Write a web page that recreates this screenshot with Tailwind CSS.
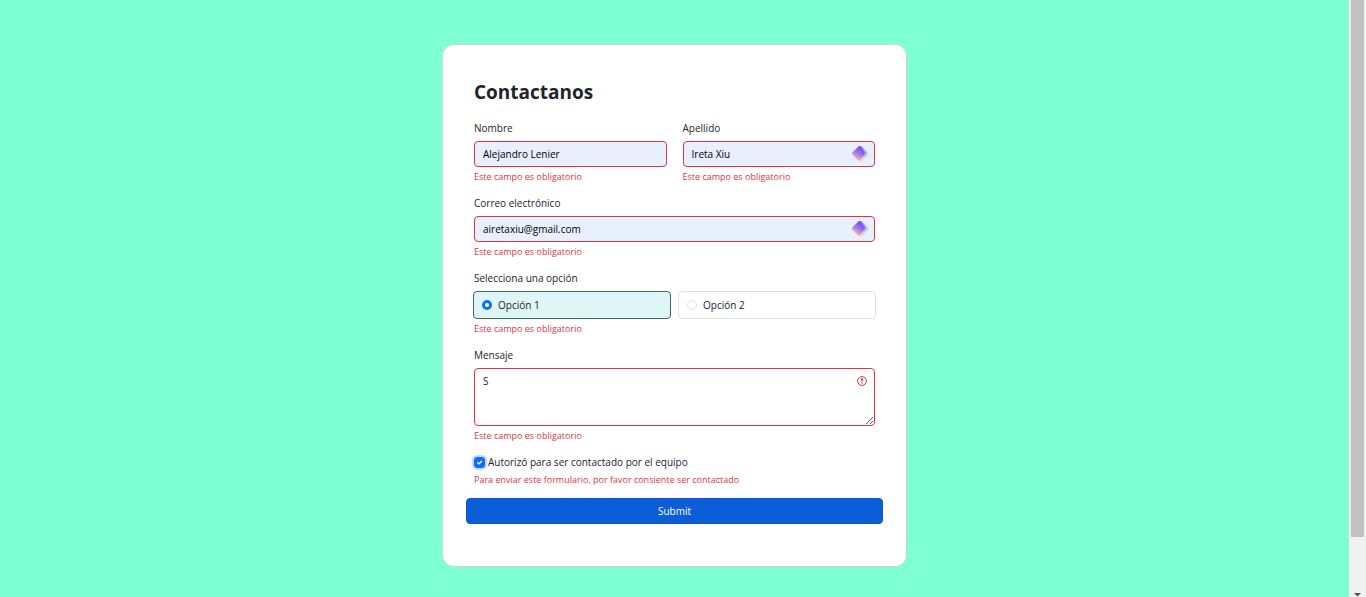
<!DOCTYPE html>
<html lang="es">
<head>
<meta charset="utf-8">
<meta name="viewport" content="width=device-width, initial-scale=1">
<title>Contactanos</title>
<script src="https://cdn.jsdelivr.net/npm/@tailwindcss/browser@4"></script>
</head>
<body class="flex min-h-screen bg-[#7fffd4] font-['Open_Sans','Noto_Sans',sans-serif] text-[10px] leading-4 text-[#212529]">
<main class="flex min-w-0 flex-1 items-start justify-center pt-11">
  <form novalidate class="w-full max-w-[465px] rounded-xl border border-[#d3d3d3] bg-white px-[31px] pt-[33px] pb-[42px]">
    <h1 class="text-[19px] leading-7 font-bold">Contactanos</h1>

    <div class="mt-[14px] grid grid-cols-2 gap-4">
      <div>
        <label for="nombre" class="mb-[5px] block">Nombre</label>
        <input id="nombre" type="text" value="Alejandro Lenier" class="block h-[26px] w-full rounded-[4px] border border-[#dc3545] bg-[#e8f0fe] px-2 text-black outline-none">
        <p class="mt-1 text-[9px] leading-3 text-[#dc3545]">Este campo es obligatorio</p>
      </div>
      <div>
        <label for="apellido" class="mb-[5px] block">Apellido</label>
        <div class="relative">
          <input id="apellido" type="text" value="Ireta Xiu" class="block h-[26px] w-full rounded-[4px] border border-[#dc3545] bg-[#e8f0fe] pr-7 pl-2 text-black outline-none">
          <svg class="absolute top-1 right-[6px] size-[18px]" viewBox="0 0 18 18" aria-hidden="true">
            <defs>
              <linearGradient id="gem" x1="0.75" y1="0.1" x2="0.3" y2="0.95"><stop offset="0.15" stop-color="#7a50fa"/><stop offset="0.5" stop-color="#9a7be6"/><stop offset="1" stop-color="#ffc2a0"/></linearGradient>
              <linearGradient id="gem-back" x1="0.4" y1="0" x2="0.5" y2="1"><stop offset="0" stop-color="#8a66f5"/><stop offset="0.5" stop-color="#c6b5f3"/><stop offset="1" stop-color="#ffdcc8"/></linearGradient>
            </defs>
            <path d="M8.5 1.5Q9.5.5 10.7 1.5L16.6 7.8Q17.4 8.9 16.6 10L10.7 16.7Q9.5 17.6 8.5 16.7L4 9Z" fill="url(#gem-back)"/>
            <path d="M7.4 1.4Q8.5.4 9.5 1.4L13.7 7.2Q14.4 8.3 13.7 9.3L8.8 15Q7.6 16 6.5 15L1.3 9.7Q.5 8.6 1.3 7.5Z" fill="url(#gem)"/>
          </svg>
        </div>
        <p class="mt-1 text-[9px] leading-3 text-[#dc3545]">Este campo es obligatorio</p>
      </div>
    </div>

    <div class="mt-3">
      <label for="correo" class="mb-[5px] block">Correo electrónico</label>
      <div class="relative">
        <input id="correo" type="email" value="airetaxiu@gmail.com" class="block h-[26px] w-full rounded-[4px] border border-[#dc3545] bg-[#e8f0fe] pr-7 pl-2 text-black outline-none">
        <svg class="absolute top-1 right-[6px] size-[18px]" viewBox="0 0 18 18" aria-hidden="true">
          <path d="M8.5 1.5Q9.5.5 10.7 1.5L16.6 7.8Q17.4 8.9 16.6 10L10.7 16.7Q9.5 17.6 8.5 16.7L4 9Z" fill="url(#gem-back)"/>
          <path d="M7.4 1.4Q8.5.4 9.5 1.4L13.7 7.2Q14.4 8.3 13.7 9.3L8.8 15Q7.6 16 6.5 15L1.3 9.7Q.5 8.6 1.3 7.5Z" fill="url(#gem)"/>
        </svg>
      </div>
      <p class="mt-1 text-[9px] leading-3 text-[#dc3545]">Este campo es obligatorio</p>
    </div>

    <fieldset class="mt-3">
      <legend class="mb-[5px]">Selecciona una opción</legend>
      <div class="-mx-px grid grid-cols-2 gap-[7px]">
        <label class="flex h-7 items-center gap-[6px] rounded-[4px] border border-[#dee2e6] bg-white px-2 has-checked:border-[#3d6a64] has-checked:bg-[#dff6f8]">
          <input type="radio" name="opcion" value="1" checked class="size-[10px] appearance-none rounded-full border border-[#dee2e6] bg-white checked:border-3 checked:border-[#0d6efd]">
          Opción 1
        </label>
        <label class="flex h-7 items-center gap-[6px] rounded-[4px] border border-[#dee2e6] bg-white px-2 has-checked:border-[#3d6a64] has-checked:bg-[#dff6f8]">
          <input type="radio" name="opcion" value="2" class="size-[10px] appearance-none rounded-full border border-[#dee2e6] bg-white checked:border-3 checked:border-[#0d6efd]">
          Opción 2
        </label>
      </div>
      <p class="mt-1 text-[9px] leading-3 text-[#dc3545]">Este campo es obligatorio</p>
    </fieldset>

    <div class="mt-3">
      <label for="mensaje" class="mb-[5px] block">Mensaje</label>
      <div class="relative">
        <textarea id="mensaje" class="block h-[58px] w-full resize-y rounded-[4px] border border-[#dc3545] bg-white py-1 pr-7 pl-2 outline-none">S</textarea>
        <svg class="absolute top-2 right-2 size-[10px]" viewBox="0 0 12 12" fill="none" stroke="#dc3545" aria-hidden="true">
          <circle cx="6" cy="6" r="5.3" stroke-width="1.2"/>
          <path d="M5.3 3h1.4L6 6.5z" fill="#dc3545" stroke-linejoin="round"/>
          <circle cx="6" cy="8.5" r=".9" fill="#dc3545" stroke="none"/>
        </svg>
      </div>
      <p class="mt-1 text-[9px] leading-3 text-[#dc3545]">Este campo es obligatorio</p>
    </div>

    <div class="mt-3">
      <div class="flex items-center gap-[3px]">
        <span class="relative flex">
          <input id="autorizo" type="checkbox" checked class="peer size-[11px] appearance-none rounded-[3px] border border-[#dee2e6] ring-2 ring-[#0d6efd]/25 checked:border-[#0d6efd] checked:bg-[#0d6efd]">
          <svg class="pointer-events-none invisible absolute inset-0 size-[11px] peer-checked:visible" viewBox="0 0 11 11" fill="none" stroke="#fff" stroke-width="1.3" stroke-linecap="round" stroke-linejoin="round" aria-hidden="true"><path d="M3.7 5.7l1.3 1.3 2.5-2.7"/></svg>
        </span>
        <label for="autorizo">Autorizó para ser contactado por el equipo</label>
      </div>
      <p class="mt-1 text-[9px] leading-3 text-[#dc3545]">Para enviar este formulario, por favor consiente ser contactado</p>
    </div>

    <div class="-mx-2 mt-3">
      <button type="button" class="block h-[26px] w-full rounded-[4px] border border-[#0a58ca] bg-[#0b5ed7] text-white">Submit</button>
    </div>
  </form>
</main>
<div class="sticky top-0 flex h-screen w-[17px] flex-col items-center bg-[#f1f1f1]" aria-hidden="true">
  <div class="h-[90%] w-[13px] bg-[#c1c1c1]"></div>
  <svg class="mt-auto h-[5px] w-[7px]" viewBox="0 0 7 5"><path d="M0 1h7L3.5 4.5z" fill="#505050"/></svg>
</div>
</body>
</html>
